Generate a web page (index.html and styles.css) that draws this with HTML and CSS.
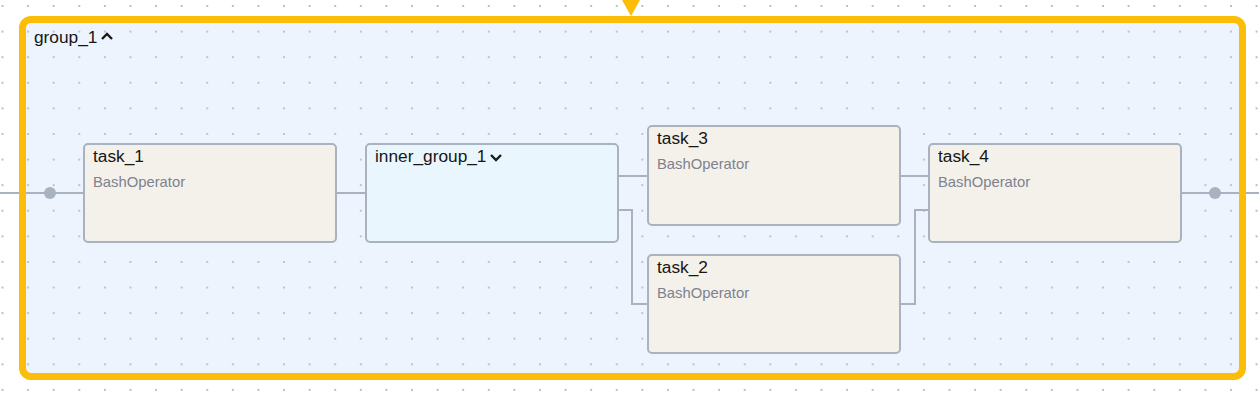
FILE: index.html
```html
<!DOCTYPE html>
<html>
<head>
<meta charset="utf-8">
<link rel="stylesheet" href="styles.css">
</head>
<body>
<div class="canvas">
  <div class="group-fill"></div>
  <svg class="edges" width="1259" height="397" viewBox="0 0 1259 397">
    <g fill="none" stroke="#a8b2c0" stroke-width="2">
      <path d="M0 193 H83"/>
      <path d="M337 193 H365"/>
      <path d="M619 176 H647"/>
      <path d="M619 210 H632 V304 H647"/>
      <path d="M901 176 H928"/>
      <path d="M901 304 H915 V210 H928"/>
      <path d="M1182 193 H1259"/>
    </g>
    <circle cx="50" cy="193" r="6" fill="#a8b2c0"/>
    <circle cx="1215" cy="193" r="6" fill="#a8b2c0"/>
  </svg>
  <div class="group-frame">
    <div class="group-label">group_1
      <svg class="chev" width="14" height="10" viewBox="0 0 14 10"><polyline points="2,8 7,3 12,8" fill="none" stroke="#1a1a1a" stroke-width="2.4"/></svg>
    </div>
  </div>
  <div class="pointer"></div>

  <div class="node task n1">
    <div class="title">task_1</div>
    <div class="sub">BashOperator</div>
  </div>
  <div class="node inner n2">
    <div class="title">inner_group_1
      <svg class="chev" width="14" height="10" viewBox="0 0 14 10"><polyline points="2,3 7,8 12,3" fill="none" stroke="#1a1a1a" stroke-width="2.4"/></svg>
    </div>
  </div>
  <div class="node task n3">
    <div class="title">task_3</div>
    <div class="sub">BashOperator</div>
  </div>
  <div class="node task n4">
    <div class="title">task_2</div>
    <div class="sub">BashOperator</div>
  </div>
  <div class="node task n5">
    <div class="title">task_4</div>
    <div class="sub">BashOperator</div>
  </div>
</div>
</body>
</html>
```
FILE: styles.css
```css
html, body {
  margin: 0;
  padding: 0;
  background: #ffffff;
}
.canvas {
  position: relative;
  width: 1259px;
  height: 397px;
  overflow: hidden;
  font-family: "Liberation Sans", Arial, sans-serif;
  background-color: #ffffff;
  background-image: radial-gradient(circle, #b9bfc8 0.8px, rgba(185,191,200,0) 1.3px);
  background-size: 25.6px 25.6px;
  background-position: -10.3px -6.8px;
}
.group-fill {
  position: absolute;
  left: 19px;
  top: 16px;
  width: 1227px;
  height: 364px;
  border-radius: 12px;
  background: rgba(184, 212, 246, 0.25);
}
.edges {
  position: absolute;
  left: 0;
  top: 0;
}
.group-frame {
  position: absolute;
  left: 19px;
  top: 16px;
  width: 1227px;
  height: 364px;
  box-sizing: border-box;
  border: 7px solid #fbbd08;
  border-radius: 12px;
  padding: 4px 8px;
}
.group-label {
  font-size: 17.3px;
  line-height: 20px;
  color: #161616;
  display: flex;
  align-items: center;
  gap: 3px;
}
.chev {
  display: block;
  margin-top: -3px;
}
.pointer {
  position: absolute;
  left: 622px;
  top: 0;
  width: 0;
  height: 0;
  border-left: 9px solid transparent;
  border-right: 9px solid transparent;
  border-top: 16px solid #fbbd08;
}
.node {
  position: absolute;
  width: 254px;
  height: 100px;
  box-sizing: border-box;
  border: 2px solid #a8b2c0;
  border-radius: 5px;
  padding: 1px 8px;
}
.task { background: #f4f1eb; }
.inner { background: #eaf6fe; }
.n1 { left: 83px; top: 143px; }
.n2 { left: 365px; top: 143px; }
.n3 { left: 647px; top: 125px; height: 101px; }
.n4 { left: 647px; top: 254px; }
.n5 { left: 928px; top: 143px; }
.title {
  font-size: 17.3px;
  line-height: 20px;
  color: #161616;
  display: flex;
  align-items: center;
  gap: 3px;
}
.title .chev { margin-top: 2px; }
.sub {
  margin-top: 8px;
  font-size: 14.8px;
  line-height: 17px;
  color: #7d828e;
}
```
